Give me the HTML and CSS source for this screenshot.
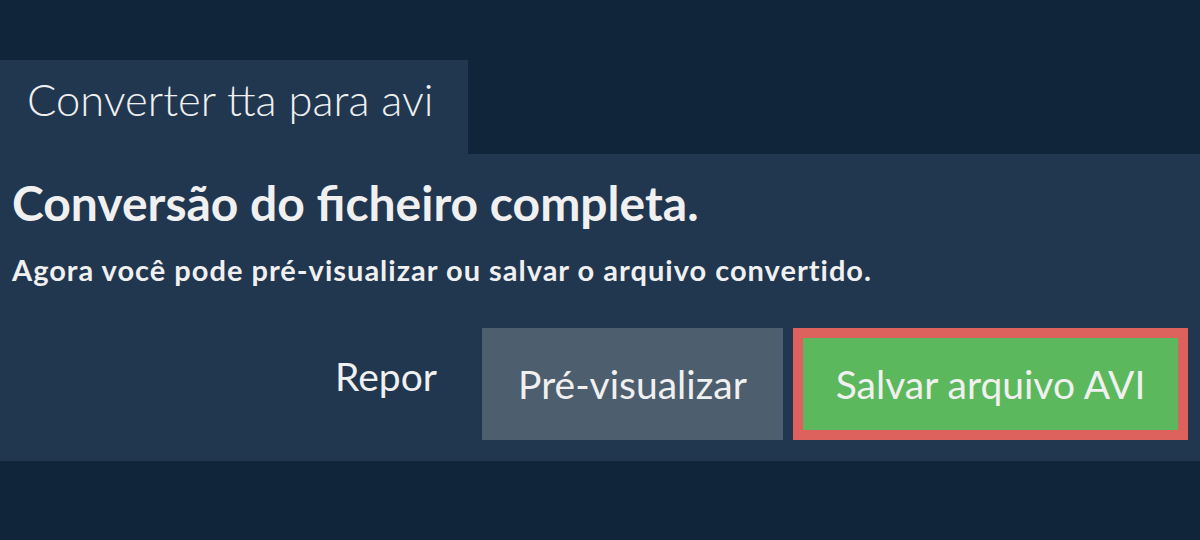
FILE: index.html
```html
<!DOCTYPE html>
<html lang="pt">
<head>
    <meta charset="UTF-8">
    <title>Converter tta para avi</title>
    <link rel="stylesheet" href="styles.css">
</head>
<body>
    <div class="tab">Converter tta para avi</div>
    <div class="panel">
        <h1>Conversão do ficheiro completa.</h1>
        <p class="info">Agora você pode pré-visualizar ou salvar o arquivo convertido.</p>
        <div class="actions">
            <button class="btn btn-link">Repor</button>
            <button class="btn btn-grey">Pré-visualizar</button>
            <button class="btn btn-save">Salvar arquivo AVI</button>
        </div>
    </div>
</body>
</html>
```

FILE: styles.css
```css
body {
    margin: 0;
    padding-top: 60px;
    background-color: #10243a;
    font-family: Lato, "Open Sans", sans-serif;
    color: #f0f0f0;
}
.tab {
    width: 468px;
    height: 94px;
    box-sizing: border-box;
    padding: 13px 0 0 27px;
    background-color: #213750;
    font-size: 43.5px;
    font-weight: 300;
    line-height: 52px;
}
.panel {
    height: 307px;
    box-sizing: border-box;
    padding: 20px 12px 0 12px;
    background-color: #213750;
}
h1 {
    margin: 0;
    font-size: 48px;
    font-weight: 700;
    line-height: 58px;
}
.info {
    margin: 20px 0 0 0;
    font-size: 29px;
    font-weight: 700;
    line-height: 36px;
    letter-spacing: 1px;
}
.actions {
    display: flex;
    justify-content: flex-end;
    align-items: center;
    gap: 10px;
    margin-top: 40px;
}
.btn {
    font-family: Lato, "Open Sans", sans-serif;
    font-size: 39px;
    color: #f0f0f0;
    border: none;
    height: 112px;
    padding: 0 35px;
    white-space: nowrap;
    cursor: pointer;
}
.btn-link {
    background: none;
    padding-bottom: 16px;
}
.btn-grey {
    background-color: #4d5e6e;
    width: 301px;
}
.btn-save {
    background-color: #5cb85c;
    border: 10px solid #dd615c;
    width: 395px;
    padding: 0 20px;
}
```
